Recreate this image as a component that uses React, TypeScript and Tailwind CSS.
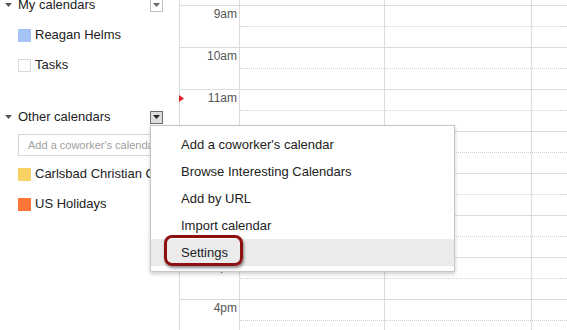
import React from "react";

const hours = ["8am", "9am", "10am", "11am", "12pm", "1pm", "2pm", "3pm", "4pm"];

function DownTri({ className }: { className?: string }) {
  return (
    <svg width="7" height="4" viewBox="0 0 7 4" className={className}>
      <polygon points="0,0 7,0 3.5,4" fill="currentColor" />
    </svg>
  );
}

function DropBtn({ active }: { active?: boolean }) {
  return (
    <div
      className={
        active
          ? "ml-auto w-[13px] h-[13px] border border-[#6e6e6e] bg-[#dcdcdc] flex items-center justify-center text-[#222]"
          : "ml-auto w-[13px] h-[13px] border border-[#c0c0c0] bg-white flex items-center justify-center text-[#666]"
      }
    >
      <DownTri />
    </div>
  );
}

function CalRow({ color, border, label, extra }: { color: string; border?: boolean; label: string; extra?: string }) {
  return (
    <div className={"flex items-center h-[30px] pl-[18px] whitespace-nowrap " + (extra ?? "")}>
      <div
        className={"w-[13px] h-[13px] shrink-0 " + (border ? "border border-[#d9d9d9] bg-white" : "")}
        style={border ? undefined : { backgroundColor: color }}
      />
      <span className="ml-[4px] text-[13px] text-[#222]">{label}</span>
    </div>
  );
}

export default function App() {
  return (
    <div
      className="relative w-[567px] h-[330px] overflow-hidden bg-white flex"
      style={{ fontFamily: '"Liberation Sans", Arial, sans-serif' }}
    >
      {/* Sidebar */}
      <div className="w-[179px] shrink-0 overflow-hidden -mt-[6px] flex flex-col">
        <div className="flex items-center h-[22px] pl-[5px] pr-[16px]">
          <DownTri className="text-[#555]" />
          <span className="ml-[6px] text-[13px] text-[#222]">My calendars</span>
          <DropBtn />
        </div>
        <CalRow color="#a4c2f4" label="Reagan Helms" extra="mt-[4px]" />
        <CalRow color="" border label="Tasks" />
        <div className="flex items-center h-[22px] pl-[5px] pr-[16px] mt-[26px]">
          <DownTri className="text-[#555]" />
          <span className="ml-[6px] text-[13px] text-[#222]">Other calendars</span>
          <DropBtn active />
        </div>
        <div className="mt-[6px] ml-[18px] mr-[16px] h-[22px] border border-[#d6d6d6] flex items-center pl-[9px] whitespace-nowrap overflow-hidden">
          <span className="text-[11px] text-[#a0a0a0]">Add a coworker's calendar</span>
        </div>
        <CalRow color="#fad165" label="Carlsbad Christian Calendar" extra="mt-[3px]" />
        <CalRow color="#ff7537" label="US Holidays" />
      </div>

      {/* Grid */}
      <div className="flex-1 border-l border-[#dcdcdc] -mt-[37px] flex flex-col">
        {hours.map((h) => (
          <div key={h} className="relative flex h-[42px] shrink-0 border-t border-[#dcdcdc]">
            <div className="w-[59px] shrink-0 text-right pr-[2px] pt-[1px] text-[12px] leading-[15px] text-[#555]">{h}</div>
            {[145, 147, 40].map((w, i) => (
              <div key={i} className="shrink-0 border-l border-[#dcdcdc] flex flex-col" style={{ width: w }}>
                <div className="h-[20px]" />
                <div className="border-t border-dotted border-[#cfcfcf]" />
              </div>
            ))}
            {h === "11am" && (
              <svg width="5" height="7" viewBox="0 0 5 7" className="absolute left-[-1px] top-[5px]">
                <polygon points="0,0 5,3.5 0,7" fill="#d22" />
              </svg>
            )}
          </div>
        ))}
      </div>

      {/* Menu */}
      <div className="absolute left-[150px] top-[125px] w-[305px] border border-[#c6c6c6] bg-white py-[5px] shadow-[0_2px_4px_rgba(0,0,0,0.2)] text-[13px] text-[#222]">
        {["Add a coworker's calendar", "Browse Interesting Calendars", "Add by URL", "Import calendar", "Settings"].map((t) => (
          <div
            key={t}
            className={"h-[27px] flex items-center pl-[30px] " + (t === "Settings" ? "bg-[#ebebeb]" : "")}
          >
            {t}
          </div>
        ))}
      </div>

      {/* Annotation */}
      <div className="absolute left-[164px] top-[235px] w-[79px] h-[31px] border-[3px] border-[#8e1111] rounded-[8px] shadow-[1px_2px_3px_rgba(0,0,0,0.45)]" />
    </div>
  );
}
